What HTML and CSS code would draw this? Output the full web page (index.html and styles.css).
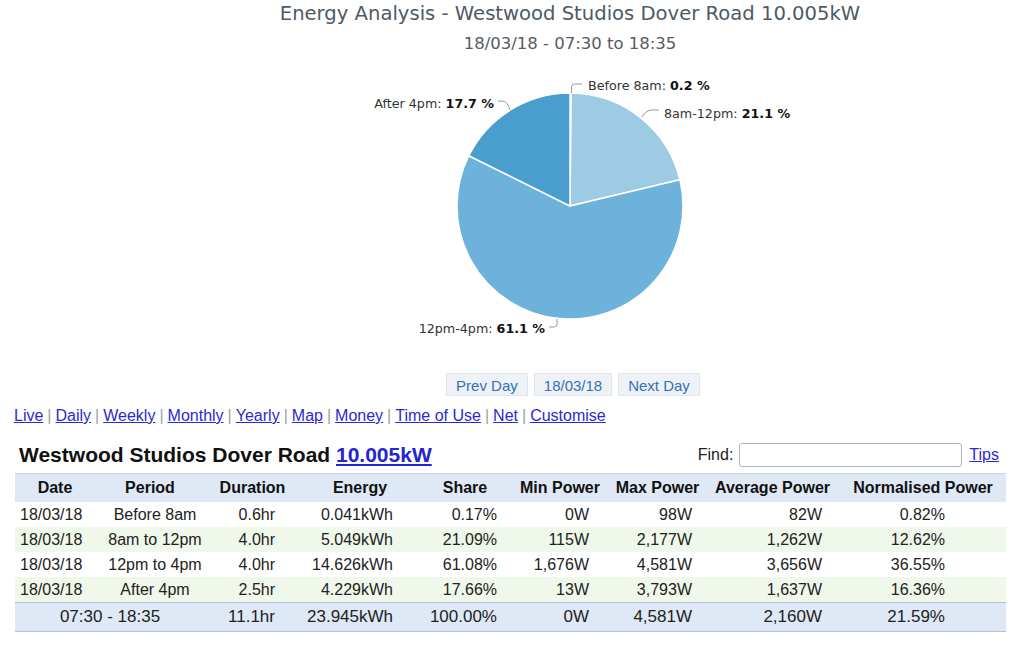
FILE: index.html
```html
<!DOCTYPE html>
<html>
<head>
<meta charset="utf-8">
<title>Energy Analysis</title>
<link rel="stylesheet" href="styles.css">
</head>
<body>
<div class="chart-head">
  <div class="chart-title">Energy Analysis - Westwood Studios Dover Road 10.005kW</div>
  <div class="chart-sub">18/03/18 - 07:30 to 18:35</div>
</div>
<svg class="pie" width="1024" height="310" viewBox="0 0 1024 310">
  <g class="slices">
    <path d="M570,150 L570,37 A113,113 0 0 1 571.21,37.01 Z" fill="#c6dcef"/>
    <path d="M570,150 L571.21,37.01 A113,113 0 0 1 679.89,123.69 Z" fill="#9ecbe4"/>
    <path d="M570,150 L679.89,123.69 A113,113 0 1 1 468.80,99.71 Z" fill="#6db2da"/>
    <path d="M570,150 L468.80,99.71 A113,113 0 0 1 570,37 Z" fill="#4a9ece"/>
  </g>
  <g class="connectors">
    <path d="M571.5,37 L571.5,31 Q571.5,28 574.5,28 L582,28"/>
    <path d="M498,45 L502,45 Q506,45 508,49 L510,54"/>
    <path d="M642,61 Q646,54 652,54 L659,54"/>
    <path d="M557,263 L557,268 Q557,271 554,271 L549,271"/>
  </g>
  <g class="labels">
    <text x="588" y="33.5">Before 8am: <tspan class="v">0.2 %</tspan></text>
    <text x="494" y="51.5" text-anchor="end">After 4pm: <tspan class="v">17.7 %</tspan></text>
    <text x="664" y="61.5">8am‑12pm: <tspan class="v">21.1 %</tspan></text>
    <text x="545" y="276.5" text-anchor="end">12pm‑4pm: <tspan class="v">61.1 %</tspan></text>
  </g>
</svg>
<div class="daynav">
  <span class="daybtn">Prev Day</span>
  <span class="daybtn">18/03/18</span>
  <span class="daybtn">Next Day</span>
</div>
<div class="links">
  <a href="#">Live</a><span class="sep">|</span><a href="#">Daily</a><span class="sep">|</span><a href="#">Weekly</a><span class="sep">|</span><a href="#">Monthly</a><span class="sep">|</span><a href="#">Yearly</a><span class="sep">|</span><a href="#">Map</a><span class="sep">|</span><a href="#">Money</a><span class="sep">|</span><a href="#">Time of Use</a><span class="sep">|</span><a href="#">Net</a><span class="sep">|</span><a href="#">Customise</a>
</div>
<div class="table-head">
  <div class="sys-title">Westwood Studios Dover Road <a href="#">10.005kW</a></div>
  <div class="find">
    <label>Find:</label>
    <input type="text" class="find-input">
    <a href="#" class="tips">Tips</a>
  </div>
</div>
<table class="data">
  <colgroup>
    <col class="w-date"><col class="w-period"><col class="w-dur"><col class="w-en"><col class="w-sh"><col class="w-min"><col class="w-max"><col class="w-avg"><col class="w-norm">
  </colgroup>
  <thead>
    <tr><th>Date</th><th>Period</th><th>Duration</th><th>Energy</th><th>Share</th><th>Min Power</th><th>Max Power</th><th>Average Power</th><th>Normalised Power</th></tr>
  </thead>
  <tbody>
    <tr><td class="c-date">18/03/18</td><td class="c-per">Before 8am</td><td class="c-dur">0.6hr</td><td class="c-en">0.041kWh</td><td class="c-sh">0.17%</td><td class="c-min">0W</td><td class="c-max">98W</td><td class="c-avg">82W</td><td class="c-norm">0.82%</td></tr>
    <tr class="alt"><td class="c-date">18/03/18</td><td class="c-per">8am to 12pm</td><td class="c-dur">4.0hr</td><td class="c-en">5.049kWh</td><td class="c-sh">21.09%</td><td class="c-min">115W</td><td class="c-max">2,177W</td><td class="c-avg">1,262W</td><td class="c-norm">12.62%</td></tr>
    <tr><td class="c-date">18/03/18</td><td class="c-per">12pm to 4pm</td><td class="c-dur">4.0hr</td><td class="c-en">14.626kWh</td><td class="c-sh">61.08%</td><td class="c-min">1,676W</td><td class="c-max">4,581W</td><td class="c-avg">3,656W</td><td class="c-norm">36.55%</td></tr>
    <tr class="alt"><td class="c-date">18/03/18</td><td class="c-per">After 4pm</td><td class="c-dur">2.5hr</td><td class="c-en">4.229kWh</td><td class="c-sh">17.66%</td><td class="c-min">13W</td><td class="c-max">3,793W</td><td class="c-avg">1,637W</td><td class="c-norm">16.36%</td></tr>
  </tbody>
  <tfoot>
    <tr class="total"><td colspan="2" class="c-range">07:30 - 18:35</td><td class="c-dur">11.1hr</td><td class="c-en">23.945kWh</td><td class="c-sh">100.00%</td><td class="c-min">0W</td><td class="c-max">4,581W</td><td class="c-avg">2,160W</td><td class="c-norm">21.59%</td></tr>
  </tfoot>
</table>
</body>
</html>
```
FILE: styles.css
```css
html, body {
  margin: 0;
  padding: 0;
  background: #ffffff;
}
body {
  font-family: "Liberation Sans", Arial, sans-serif;
  color: #222222;
  width: 1024px;
}
.chart-head {
  padding-left: 116px;
  text-align: center;
  font-family: "DejaVu Sans", Verdana, sans-serif;
  color: #4e5a66;
}
.chart-title {
  font-size: 19.6px;
  line-height: 28px;
}
.chart-sub {
  font-size: 16.5px;
  line-height: 20px;
  margin-top: 6px;
  color: #555b62;
}
.pie {
  display: block;
  margin-top: 2px;
}
.slices path {
  stroke: #ffffff;
  stroke-width: 1.5;
  stroke-linejoin: round;
}
.connectors path {
  fill: none;
  stroke: #9a9a9a;
  stroke-width: 1;
}
.labels text {
  font-family: "DejaVu Sans", Verdana, sans-serif;
  font-size: 12.7px;
  fill: #333333;
}
.labels .v {
  font-weight: bold;
  fill: #111111;
}
.daynav {
  display: flex;
  justify-content: center;
  gap: 6px;
  padding-left: 122px;
  margin-top: 7px;
}
.daybtn {
  display: inline-block;
  height: 23px;
  line-height: 23px;
  padding: 0 9px;
  box-sizing: border-box;
  font-size: 15px;
  color: #3471b6;
  background: #eef2f6;
  border: 1px solid #e1e6ec;
}
.links {
  margin-top: 10px;
  padding-left: 14px;
  font-size: 16px;
  line-height: 20px;
}
.links a {
  color: #2a2ad2;
  text-decoration: underline;
}
.links .sep {
  color: #a0a0a0;
  padding: 0 4px;
}
.table-head {
  display: flex;
  justify-content: space-between;
  align-items: center;
  margin: 15px 0 0 15px;
  width: 991px;
  height: 28px;
}
.sys-title {
  padding-left: 4px;
  font-size: 21px;
  font-weight: bold;
  color: #111111;
}
.sys-title a {
  color: #2424d0;
  text-decoration: underline;
}
.find {
  display: flex;
  align-items: center;
  padding-right: 7px;
  font-size: 16px;
}
.find label {
  color: #222222;
  margin-right: 6px;
}
.find-input {
  width: 223px;
  height: 24px;
  box-sizing: border-box;
  border: 1px solid #a7b6c6;
  border-radius: 3px;
  margin: 0 7px 0 0;
  padding: 0 4px;
  background: #ffffff;
}
.tips {
  color: #2a2ad2;
  text-decoration: underline;
}
.data {
  margin: 4px 0 0 15px;
  width: 991px;
  border-collapse: collapse;
  table-layout: fixed;
  font-size: 16px;
}
.w-date { width: 80px; }
.w-period { width: 110px; }
.w-dur { width: 95px; }
.w-en { width: 120px; }
.w-sh { width: 90px; }
.w-min { width: 100px; }
.w-max { width: 95px; }
.w-avg { width: 135px; }
.w-norm { width: 166px; }
.data th {
  background: #dfe8f5;
  height: 28px;
  padding: 0;
  font-weight: bold;
  text-align: center;
  color: #111111;
  border-top: 1px solid #cdd6ec;
  white-space: nowrap;
}
.data td {
  height: 25px;
  padding: 0;
  white-space: nowrap;
  color: #222222;
}
.data tr.alt td {
  background: #eff8ea;
}
.data tr.total td {
  background: #dfe8f5;
  height: 28px;
  font-size: 17px;
  border-top: 1px solid #b6c1e6;
  border-bottom: 1px solid #b6c1e6;
}
.c-date { text-align: left; padding-left: 5px !important; }
.c-per { text-align: center; padding-left: 10px !important; }
.c-range { text-align: center; }
.c-dur { text-align: right; padding-right: 25px !important; }
.c-en { text-align: right; padding-right: 27px !important; }
.c-sh { text-align: right; padding-right: 13px !important; }
.c-min { text-align: right; padding-right: 21px !important; }
.c-max { text-align: right; padding-right: 13px !important; }
.c-avg { text-align: right; padding-right: 18px !important; }
.c-norm { text-align: right; padding-right: 61px !important; }
```
